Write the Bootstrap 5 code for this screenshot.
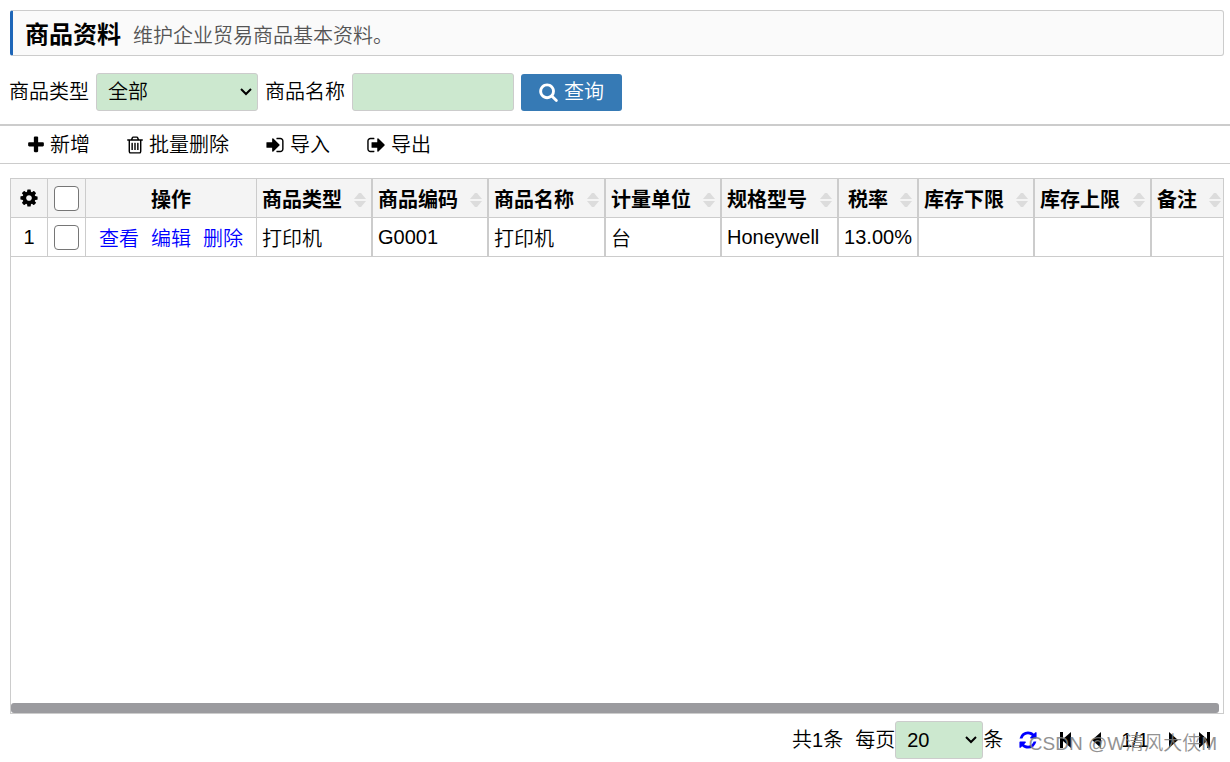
<!DOCTYPE html>
<html lang="zh-CN">
<head>
<meta charset="utf-8">
<meta name="viewport" content="width=device-width, initial-scale=1">
<title>商品资料</title>
<link href="https://cdn.jsdelivr.net/npm/bootstrap@5.3.0/dist/css/bootstrap.min.css" rel="stylesheet">
<style>
body { font-family: "Liberation Sans", "Noto Sans CJK SC", sans-serif; font-size: 20px; font-weight: 350; line-height: 30px; color: #000; }
.page-title { margin: 10px 6px 0 10px; padding: 4px 12px 0; height: 46px; background: #fafafa; border: 1px solid #ccc; border-left: 3px solid #1e66b8; border-radius: 3px; }
.page-title h1 { font-size: 24px; line-height: 36px; font-weight: 700; }
.page-title small { font-size: 20px; color: #555; padding-top: 2px; }
.filters { padding: 17px 9px 13px; gap: 7px; }
.field { height: 38px; padding: 0 11px; border: 1px solid #ccc; border-radius: 3px; background-color: #cce8cf; color: #000; font-size: 20px; font-weight: 350; line-height: 30px; width: 162px; }
select.field { appearance: none; background-image: url("data:image/svg+xml,%3Csvg xmlns='http://www.w3.org/2000/svg' viewBox='0 0 12 8'%3E%3Cpath d='M1 1l5 5 5-5' fill='none' stroke='%23000' stroke-width='2'/%3E%3C/svg%3E"); background-repeat: no-repeat; background-size: 12px 8px; background-position: right 5px center; }
.field.page-size { width: 88px; }
.btn-query { height: 37px; padding: 0 18px; background: #367ab5; color: #fff; border: 0; border-radius: 3px; font-size: 20px; font-weight: 350; line-height: 30px; gap: 6px; }
.btn-query:hover { background: #2d6798; color: #fff; }
.tools { border-top: 2px solid #ccc; border-bottom: 1px solid #ccc; padding: 0 28px; height: 40px; gap: 37px; }
.tools button, .pager button { background: none; border: 0; padding: 0; color: #000; font-weight: 350; line-height: 30px; gap: 6px; }
svg { fill: currentColor; flex: none; display: block; }
.data-panel { margin: 14px 6px 0 10px; border: 1px solid #ccc; min-height: 120px; }
.data-grid { table-layout: fixed; width: 1215px; min-width: 100%; border-collapse: separate; border-spacing: 0; }
.data-grid th, .data-grid td { height: 39px; padding: 0 5px; border-right: 1px solid #ccc; border-bottom: 1px solid #ccc; white-space: nowrap; line-height: 30px; }
.data-grid th { background: #f4f4f4; font-weight: 700; }
.data-grid .split { border-left: 1px solid #ccc; }
.data-grid .label-cell { padding-top: 3px; }
.data-grid a { color: #00f; text-decoration: none; margin: 0 6px; }
.data-grid input { appearance: none; display: block; width: 25px; height: 25px; margin: 0 auto; border: 1px solid #767676; border-radius: 4px; background: #fff; }
.data-grid input:checked { background: #367ab5; }
.c-no { width: 37px; } .c-check { width: 38px; } .c-act { width: 171px; }
.c-first { width: 115px; } .c-a { width: 116px; } .c-b { width: 117px; } .c-rate { width: 80px; } .c-note { width: 77px; }
.sort-mark { color: #dcdcdc; }
.scroll-thumb { height: 10px; margin-right: 4px; background: #9b9b9f; border-radius: 3px; }
.pager { padding: 7px 19px 3px 10px; }
.pager-nav { gap: 18px; }
.watermark { right: 13px; bottom: 3px; font-size: 19px; line-height: 30px; color: #808080; opacity: .85; pointer-events: none; }
</style>
</head>
<body>
<div class="d-flex flex-column min-vh-100 position-relative">
  <header class="page-title d-flex align-items-center">
    <h1 class="m-0">商品资料</h1><small class="ms-2 ps-1">维护企业贸易商品基本资料。</small>
  </header>

  <form class="filters d-flex flex-wrap align-items-center">
    <label for="type">商品类型</label>
    <select id="type" class="field"><option>全部</option></select>
    <label for="name">商品名称</label>
    <input id="name" type="text" class="field">
    <button type="button" class="btn btn-query d-flex align-items-center">
      <svg width="19" height="20" viewBox="64 0 1664 1792"><path d="M1216 832q0-185-131.500-316.500t-316.500-131.500-316.500 131.500-131.500 316.500 131.500 316.500 316.500 131.500 316.500-131.500 131.500-316.500zm512 832q0 52-38 90t-90 38q-54 0-90-38l-343-342q-179 124-399 124-143 0-273.500-55.500t-225-150-150-225-55.500-273.500 55.500-273.500 150-225 225-150 273.500-55.500 273.500 55.500 225 150 150 225 55.500 273.500q0 220-124 399l343 343q37 37 37 90z"/></svg>
      <span>查询</span>
    </button>
  </form>

  <div class="tools d-flex align-items-center" role="toolbar">
    <button type="button" class="d-flex align-items-center">
      <svg width="16" height="20" viewBox="192 0 1408 1792"><path d="M1600 736v192q0 40-28 68t-68 28h-416v416q0 40-28 68t-68 28h-192q-40 0-68-28t-28-68v-416h-416q-40 0-68-28t-28-68v-192q0-40 28-68t68-28h416v-416q0-40 28-68t68-28h192q40 0 68 28t28 68v416h416q40 0 68 28t28 68z"/></svg>
      <span>新增</span>
    </button>
    <button type="button" class="d-flex align-items-center">
      <svg width="16" height="20" viewBox="192 0 1408 1792"><path d="M704 736v576q0 14-9 23t-23 9h-64q-14 0-23-9t-9-23v-576q0-14 9-23t23-9h64q14 0 23 9t9 23zm256 0v576q0 14-9 23t-23 9h-64q-14 0-23-9t-9-23v-576q0-14 9-23t23-9h64q14 0 23 9t9 23zm256 0v576q0 14-9 23t-23 9h-64q-14 0-23-9t-9-23v-576q0-14 9-23t23-9h64q14 0 23 9t9 23zm128 724v-948h-896v948q0 22 7 40.500t14.500 27 10.500 8.500h832q3 0 10.500-8.500t14.500-27 7-40.500zm-672-1076h448l-48-117q-7-9-17-11h-317q-10 2-17 11zm928 32v64q0 14-9 23t-23 9h-96v948q0 83-47 143.500t-113 60.500h-832q-66 0-113-58.500t-47-141.500v-952h-96q-14 0-23-9t-9-23v-64q0-14 9-23t23-9h309l70-167q15-37 54-63t79-26h320q40 0 79 26t54 63l70 167h309q14 0 23 9t9 23z"/></svg>
      <span>批量删除</span>
    </button>
    <button type="button" class="d-flex align-items-center">
      <svg width="18" height="20" viewBox="128 0 1536 1792"><path d="M1312 896q0 26-19 45l-544 544q-19 19-45 19t-45-19-19-45v-288h-448q-26 0-45-19t-19-45v-384q0-26 19-45t45-19h448v-288q0-26 19-45t45-19 45 19l544 544q19 19 19 45zm352-352v704q0 119-84.500 203.500t-203.500 84.500h-320q-13 0-22.500-9.500t-9.500-22.500q0-4-1-20t-.5-26.500 3-23.500 10-19.500 20.500-6.500h320q66 0 113-47t47-113v-704q0-66-47-113t-113-47h-312l-11.500-1-11.500-3-8-5.500-7-9-2-13.500q0-4-1-20t-.5-26.500 3-23.500 10-19.500 20.500-6.500h320q119 0 203.500 84.500t84.500 203.500z"/></svg>
      <span>导入</span>
    </button>
    <button type="button" class="d-flex align-items-center">
      <svg width="18" height="20" viewBox="64 0 1568 1792"><path d="M704 1440q0 4 1 20t.5 26.500-3 23.500-10 19.500-20.500 6.500h-320q-119 0-203.500-84.500t-84.500-203.500v-704q0-119 84.500-203.500t203.500-84.500h320q13 0 22.500 9.500t9.500 22.500q0 4 1 20t.5 26.500-3 23.500-10 19.500-20.500 6.500h-320q-66 0-113 47t-47 113v704q0 66 47 113t113 47h312l11.500 1 11.500 3 8 5.500 7 9 2 13.500zm928-544q0 26-19 45l-544 544q-19 19-45 19t-45-19-19-45v-288h-448q-26 0-45-19t-19-45v-384q0-26 19-45t45-19h448v-288q0-26 19-45t45-19 45 19l544 544q19 19 19 45z"/></svg>
      <span>导出</span>
    </button>
  </div>

  <svg class="d-none"><symbol id="sort" viewBox="0 0 12 16"><path d="M0 7l5-6h2l5 6zM0 9h12l-5 6h-2z"/></symbol></svg>

  <main class="data-panel flex-grow-1 d-flex flex-column">
    <div class="flex-grow-1 overflow-hidden">
      <table class="data-grid">
        <colgroup><col class="c-no"><col class="c-check"><col class="c-act"><col class="c-first"><col class="c-a"><col class="c-b"><col class="c-a"><col class="c-b"><col class="c-rate"><col class="c-a"><col class="c-b"><col class="c-note"></colgroup>
        <thead>
          <tr>
            <th><svg class="mx-auto" width="20" height="20" viewBox="0 0 1792 1792"><path d="M1152 896q0-106-75-181t-181-75-181 75-75 181 75 181 181 75 181-75 75-181zm512-109v222q0 12-8 23t-20 13l-185 28q-19 54-39 91 35 50 107 138 10 12 10 25t-9 23q-27 37-99 108t-94 71q-12 0-26-9l-138-108q-44 23-91 38-16 136-29 186-7 28-36 28h-222q-14 0-24.500-8.500t-11.500-21.500l-28-184q-49-16-90-37l-141 107q-10 9-25 9-14 0-25-11-126-114-165-168-7-10-7-23 0-12 8-23 15-21 51-66.500t54-70.500q-27-50-41-99l-183-27q-13-2-21-12.500t-8-23.500v-222q0-12 8-23t19-13l186-28q14-46 39-92-40-57-107-138-10-12-10-24 0-10 9-23 26-36 98.500-107.500t94.500-71.500q13 0 26 10l138 107q44-23 91-38 16-136 29-186 7-28 36-28h222q14 0 24.500 8.500t11.500 21.500l28 184q49 16 90 37l142-107q9-9 24-9 13 0 25 10 129 119 165 170 7 8 7 22 0 12-8 23-15 21-51 66.500t-54 70.500q26 50 41 98l183 28q13 2 21 12.500t8 23.500z"/></svg></th>
            <th><input type="checkbox" aria-label="全选"></th>
            <th class="text-center label-cell">操作</th>
            <th class="label-cell"><div class="d-flex align-items-center justify-content-between">商品类型<svg class="sort-mark" width="12" height="16"><use href="#sort"/></svg></div></th>
            <th class="split label-cell"><div class="d-flex align-items-center justify-content-between">商品编码<svg class="sort-mark" width="12" height="16"><use href="#sort"/></svg></div></th>
            <th class="split label-cell"><div class="d-flex align-items-center justify-content-between">商品名称<svg class="sort-mark" width="12" height="16"><use href="#sort"/></svg></div></th>
            <th class="split label-cell"><div class="d-flex align-items-center justify-content-between">计量单位<svg class="sort-mark" width="12" height="16"><use href="#sort"/></svg></div></th>
            <th class="split label-cell"><div class="d-flex align-items-center justify-content-between">规格型号<svg class="sort-mark" width="12" height="16"><use href="#sort"/></svg></div></th>
            <th class="split label-cell"><div class="d-flex align-items-center justify-content-between ps-1">税率<svg class="sort-mark" width="12" height="16"><use href="#sort"/></svg></div></th>
            <th class="split label-cell"><div class="d-flex align-items-center justify-content-between">库存下限<svg class="sort-mark" width="12" height="16"><use href="#sort"/></svg></div></th>
            <th class="split label-cell"><div class="d-flex align-items-center justify-content-between">库存上限<svg class="sort-mark" width="12" height="16"><use href="#sort"/></svg></div></th>
            <th class="split label-cell"><div class="d-flex align-items-center gap-2"><span class="me-1">备注</span><svg class="sort-mark" width="12" height="16"><use href="#sort"/></svg></div></th>
          </tr>
        </thead>
        <tbody>
          <tr>
            <td class="text-center">1</td>
            <td><input type="checkbox" aria-label="选择第1行"></td>
            <td class="text-center label-cell"><a href="#">查看</a><a href="#">编辑</a><a href="#">删除</a></td>
            <td class="label-cell">打印机</td>
            <td class="split">G0001</td>
            <td class="split label-cell">打印机</td>
            <td class="split label-cell">台</td>
            <td class="split">Honeywell</td>
            <td class="split text-center">13.00%</td>
            <td class="split"></td>
            <td class="split"></td>
            <td class="split"></td>
          </tr>
        </tbody>
      </table>
    </div>
    <div class="scroll-thumb"></div>
  </main>

  <footer class="pager d-flex flex-wrap align-items-center justify-content-end">
    <span class="me-2 pe-1">共1条</span>
    <label for="size">每页</label>
    <select id="size" class="field page-size"><option>20</option></select>
    <span class="me-3">条</span>
    <div class="pager-nav d-flex align-items-center">
      <button type="button" aria-label="刷新" style="color:#00f"><svg width="18" height="20" viewBox="128 0 1536 1792"><path d="M1639 1056q0 5-1 7-64 268-268 434.500t-478 166.500q-146 0-282.500-55t-243.500-157l-129 129q-19 19-45 19t-45-19-19-45v-448q0-26 19-45t45-19h448q26 0 45 19t19 45-19 45l-137 137q71 66 161 102t187 36q134 0 250-65t186-179q11-17 53-117 8-23 30-23h192q13 0 22.500 9.500t9.500 22.500zm25-800v448q0 26-19 45t-45 19h-448q-26 0-45-19t-19-45 19-45l138-138q-148-137-349-137-134 0-250 65t-186 179q-11 17-53 117-8 23-30 23h-199q-13 0-22.500-9.500t-9.500-22.500v-7q65-268 270-434.500t480-166.500q146 0 284 55.500t245 156.500l130-129q19-19 45-19t45 19 19 45z"/></svg></button>
      <button type="button" class="ms-1" aria-label="首页"><svg width="13" height="20" viewBox="0 0 13 20"><path d="M1 2h3v7l8-7v16l-8-7v7H1z"/></svg></button>
      <button type="button" aria-label="上一页"><svg width="13" height="20" viewBox="0 0 13 20"><path d="M11 2v16L2 10z"/></svg></button>
      <span>1/1</span>
      <button type="button" aria-label="下一页"><svg width="13" height="20" viewBox="0 0 13 20"><path d="M2 2v16l9-8z"/></svg></button>
      <button type="button" aria-label="末页"><svg width="13" height="20" viewBox="0 0 13 20"><path d="M12 2H9v7L1 2v16l8-7v7h3z"/></svg></button>
    </div>
  </footer>
  <div class="watermark position-absolute">CSDN @W清风大侠M</div>
</div>
<script src="https://cdn.jsdelivr.net/npm/bootstrap@5.3.0/dist/js/bootstrap.bundle.min.js"></script>
</body>
</html>
